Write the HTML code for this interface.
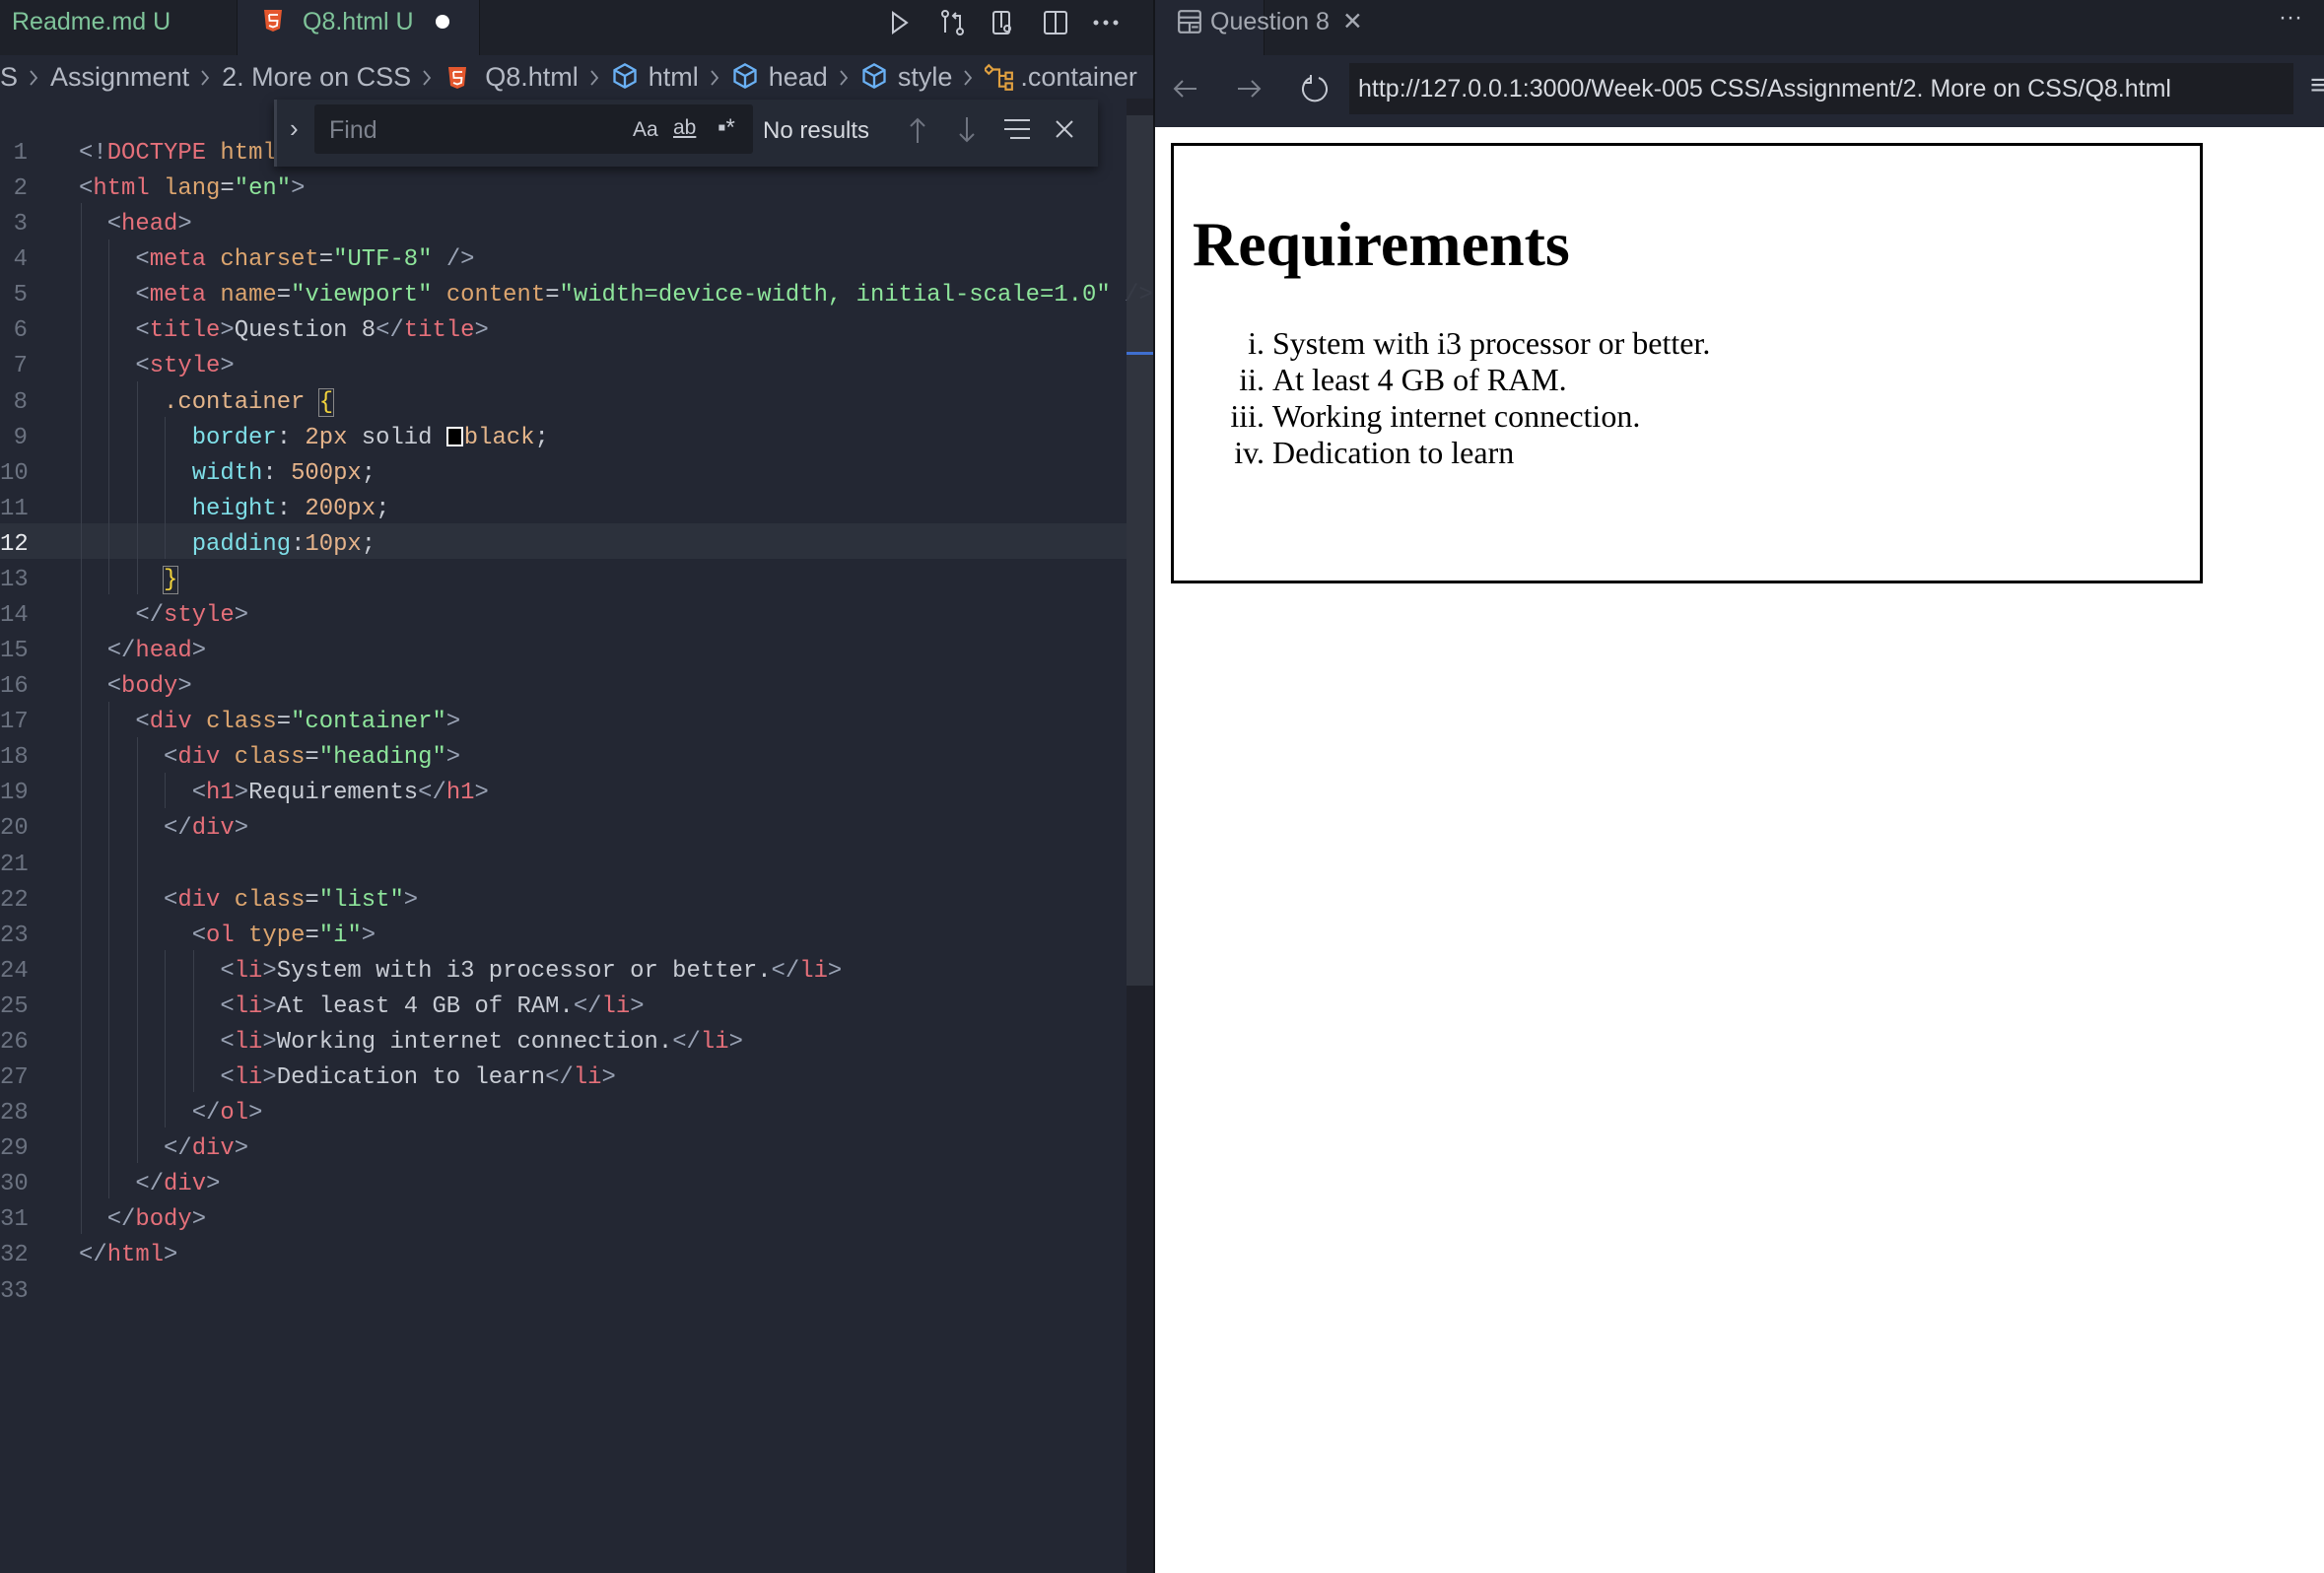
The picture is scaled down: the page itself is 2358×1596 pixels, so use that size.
<!DOCTYPE html>
<html><head><meta charset="utf-8"><style>
*{margin:0;padding:0;box-sizing:border-box}
body{width:2358px;height:1596px;overflow:hidden;background:#232733;position:relative;font-family:"Liberation Sans",sans-serif}
.a{position:absolute}
#tabs{left:0;top:0;width:1170px;height:56px;background:#1e2129}
.tab{position:absolute;top:0;height:56px;font-size:25px;line-height:44px;color:#7fc49a;white-space:nowrap}
#crumb{left:0;top:56px;width:1170px;height:44px;background:#232733;font-size:27px;color:#b4b9c4;line-height:44px;white-space:nowrap;overflow:hidden}
.s{display:inline-block;width:12px;height:18px;margin:0 11px 0 10px;vertical-align:-1px}
.code{font-family:"Liberation Mono",monospace;font-size:23.9px;white-space:pre;line-height:36.08px}
#lines{left:80px;top:138px;color:#c8ccd4}
#nums{left:0;top:138px;width:28px;text-align:right;color:#6b7280}
.t{color:#e5707a}.p{color:#9aa3b5}.at{color:#dca56f}.st{color:#8ee59b}.pr{color:#7fdfe8}.n{color:#e5b38a}.sel{color:#e4b58a}.br{color:#f2d33c}
.g{position:absolute;width:1px;background:#3a3f4b}
#find{left:278px;top:101px;width:836px;height:68px;background:#252a35;box-shadow:0 4px 10px rgba(0,0,0,.5);border-left:3px solid #3b404c}
#br{left:1170px;top:0;width:1188px;height:1596px;background:#fff;border-left:2px solid #14161b}
.cube{display:inline-block;vertical-align:-4px;margin-right:10px}
</style></head><body>
<svg width="0" height="0" style="position:absolute"><defs>
<symbol id="chev" viewBox="0 0 12 18"><path d="M3 2l6 7-6 7" fill="none" stroke="#8a909c" stroke-width="1.8"/></symbol>
<symbol id="cb" viewBox="0 0 24 24"><path d="M12 2l9 5v10l-9 5-9-5V7z M3 7l9 5 9-5 M12 12v10" fill="none" stroke="#6ab0f3" stroke-width="2"/></symbol>
</defs></svg>
<div class="a" id="tabs">
 <div class="tab" style="left:0;width:241px;padding-left:12px;border-right:1px solid #15171c">Readme.md U</div>
 <div class="tab" style="left:241px;width:246px;background:#232733;padding-left:26px;border-right:1px solid #15171c">
  <svg width="20" height="24" viewBox="0 0 20 24" style="vertical-align:-3px;margin-right:20px"><path d="M1 1h18l-2 19-7 3-7-3z" fill="#e4572e"/><path d="M6 6h9M6 6l.5 6h8l-.5 5-4 1.5-4-1.5" stroke="#fff" stroke-width="1.8" fill="none"/></svg>Q8.html U<span style="display:inline-block;width:14px;height:14px;border-radius:50%;background:#fff;margin-left:22px;vertical-align:1px"></span></div>
 <svg class="a" style="left:900px;top:8px" width="250" height="30" viewBox="0 0 250 30" fill="none" stroke="#c5c9d2" stroke-width="2">
  <path d="M6 5l14 10-14 10z"/>
  <circle cx="59" cy="6" r="3"/><circle cx="74" cy="24" r="3"/><path d="M59 9v16M74 21V8h-7M70 5l-3 3 3 3"/>
  <rect x="108" y="4" width="16" height="22" rx="2"/><path d="M116 4v16"/><circle cx="122" cy="21" r="3"/>
  <rect x="160" y="4" width="22" height="22" rx="2"/><path d="M171 4v22"/>
  <circle cx="212" cy="15" r="1.5" fill="#c5c9d2"/><circle cx="222" cy="15" r="1.5" fill="#c5c9d2"/><circle cx="232" cy="15" r="1.5" fill="#c5c9d2"/>
 </svg>
</div>
<div class="a" id="crumb">S<svg class="s"><use href="#chev"/></svg>Assignment<svg class="s"><use href="#chev"/></svg>2. More on CSS<svg class="s"><use href="#chev"/></svg><svg width="20" height="24" viewBox="0 0 20 24" style="vertical-align:-4px;margin:0 18px 0 4px"><path d="M1 1h18l-2 19-7 3-7-3z" fill="#e4572e"/><path d="M6 6h9M6 6l.5 6h8l-.5 5-4 1.5-4-1.5" stroke="#fff" stroke-width="1.8" fill="none"/></svg>Q8.html<svg class="s"><use href="#chev"/></svg><svg class="cube" width="28" height="28"><use href="#cb"/></svg>html<svg class="s"><use href="#chev"/></svg><svg class="cube" width="28" height="28"><use href="#cb"/></svg>head<svg class="s"><use href="#chev"/></svg><svg class="cube" width="28" height="28"><use href="#cb"/></svg>style<svg class="s"><use href="#chev"/></svg><svg width="30" height="30" viewBox="0 0 28 28" style="vertical-align:-6px;margin-right:6px" fill="none" stroke="#e0a040" stroke-width="2"><path d="M4 3l4 4-4 4-4-4z M20 10h6v6h-6z M20 20h6v6h-6z M8 7h6v16h6 M14 13h6"/></svg>.container</div>

<div class="a" style="left:0;top:531px;width:1143px;height:36px;background:#2c313c"></div>
<div class="g" style="left:82px;top:206px;height:1046px"></div>
<div class="g" style="left:110px;top:243px;height:360px"></div>
<div class="g" style="left:110px;top:712px;height:504px"></div>
<div class="g" style="left:139px;top:387px;height:216px"></div>
<div class="g" style="left:139px;top:748px;height:432px"></div>
<div class="g" style="left:167px;top:423px;height:144px"></div>
<div class="g" style="left:167px;top:784px;height:36px"></div>
<div class="g" style="left:167px;top:964px;height:180px"></div>
<div class="g" style="left:196px;top:964px;height:144px"></div>

<div class="a code" id="nums">1
2
3
4
5
6
7
8
9
10
11
<span style="color:#e8eaee">12</span>
13
14
15
16
17
18
19
20
21
22
23
24
25
26
27
28
29
30
31
32
33</div>
<div class="a code" id="lines"><span class="p">&lt;!</span><span class="t">DOCTYPE</span> <span class="at">html</span><span class="p">&gt;</span>
<span class="p">&lt;</span><span class="t">html</span> <span class="at">lang</span>=<span class="st">"en"</span><span class="p">&gt;</span>
  <span class="p">&lt;</span><span class="t">head</span><span class="p">&gt;</span>
    <span class="p">&lt;</span><span class="t">meta</span> <span class="at">charset</span>=<span class="st">"UTF-8"</span> <span class="p">/&gt;</span>
    <span class="p">&lt;</span><span class="t">meta</span> <span class="at">name</span>=<span class="st">"viewport"</span> <span class="at">content</span>=<span class="st">"width=device-width, initial-scale=1.0"</span> <span class="p">/&gt;</span>
    <span class="p">&lt;</span><span class="t">title</span><span class="p">&gt;</span>Question 8<span class="p">&lt;/</span><span class="t">title</span><span class="p">&gt;</span>
    <span class="p">&lt;</span><span class="t">style</span><span class="p">&gt;</span>
      <span class="sel">.container</span> <span class="br" style="outline:1px solid #888">{</span>
        <span class="pr">border</span>: <span class="n">2px</span> solid <span style="display:inline-block;width:13px;height:16px;background:#000;outline:2px solid #fff;vertical-align:-1px;margin:0 3px 0 2px"></span><span class="sel">black</span>;
        <span class="pr">width</span>: <span class="n">500px</span>;
        <span class="pr">height</span>: <span class="n">200px</span>;
        <span class="pr">padding</span>:<span class="n">10px</span>;
      <span class="br" style="outline:1px solid #888">}</span>
    <span class="p">&lt;/</span><span class="t">style</span><span class="p">&gt;</span>
  <span class="p">&lt;/</span><span class="t">head</span><span class="p">&gt;</span>
  <span class="p">&lt;</span><span class="t">body</span><span class="p">&gt;</span>
    <span class="p">&lt;</span><span class="t">div</span> <span class="at">class</span>=<span class="st">"container"</span><span class="p">&gt;</span>
      <span class="p">&lt;</span><span class="t">div</span> <span class="at">class</span>=<span class="st">"heading"</span><span class="p">&gt;</span>
        <span class="p">&lt;</span><span class="t">h1</span><span class="p">&gt;</span>Requirements<span class="p">&lt;/</span><span class="t">h1</span><span class="p">&gt;</span>
      <span class="p">&lt;/</span><span class="t">div</span><span class="p">&gt;</span>

      <span class="p">&lt;</span><span class="t">div</span> <span class="at">class</span>=<span class="st">"list"</span><span class="p">&gt;</span>
        <span class="p">&lt;</span><span class="t">ol</span> <span class="at">type</span>=<span class="st">"i"</span><span class="p">&gt;</span>
          <span class="p">&lt;</span><span class="t">li</span><span class="p">&gt;</span>System with i3 processor or better.<span class="p">&lt;/</span><span class="t">li</span><span class="p">&gt;</span>
          <span class="p">&lt;</span><span class="t">li</span><span class="p">&gt;</span>At least 4 GB of RAM.<span class="p">&lt;/</span><span class="t">li</span><span class="p">&gt;</span>
          <span class="p">&lt;</span><span class="t">li</span><span class="p">&gt;</span>Working internet connection.<span class="p">&lt;/</span><span class="t">li</span><span class="p">&gt;</span>
          <span class="p">&lt;</span><span class="t">li</span><span class="p">&gt;</span>Dedication to learn<span class="p">&lt;/</span><span class="t">li</span><span class="p">&gt;</span>
        <span class="p">&lt;/</span><span class="t">ol</span><span class="p">&gt;</span>
      <span class="p">&lt;/</span><span class="t">div</span><span class="p">&gt;</span>
    <span class="p">&lt;/</span><span class="t">div</span><span class="p">&gt;</span>
  <span class="p">&lt;/</span><span class="t">body</span><span class="p">&gt;</span>
<span class="p">&lt;/</span><span class="t">html</span><span class="p">&gt;</span>
</div>

<div class="a" style="left:1143px;top:100px;width:27px;height:1496px;background:rgba(30,33,41,.85)"></div>
<div class="a" style="left:1143px;top:117px;width:27px;height:883px;background:rgba(60,65,76,.6)"></div>
<div class="a" style="left:1143px;top:357px;width:27px;height:3px;background:#3f6fd0"></div>

<div class="a" id="find">
 <div class="a" style="left:13px;top:14px;color:#c5c9d2;font-size:26px">›</div>
 <div class="a" style="left:38px;top:5px;width:445px;height:50px;background:#1b1e25;border-radius:3px"></div>
 <div class="a" style="left:53px;top:17px;color:#7d828d;font-size:25px">Find</div>
 <div class="a" style="left:361px;top:19px;color:#c5c9d2;font-size:21px">Aa</div>
 <div class="a" style="left:402px;top:17px;color:#c5c9d2;font-size:21px;text-decoration:underline">ab</div>
 <div class="a" style="left:447px;top:15px;color:#c5c9d2;font-size:24px">▪*</div>
 <div class="a" style="left:493px;top:18px;color:#d6d9df;font-size:24px">No results</div>
 <svg class="a" style="left:640px;top:16px" width="100" height="30" fill="none" stroke="#6f7480" stroke-width="2"><path d="M10 4v24M3 11l7-7 7 7"/><path d="M60 2v24M53 19l7 7 7-7"/></svg>
 <svg class="a" style="left:736px;top:18px" width="30" height="24" fill="none" stroke="#c5c9d2" stroke-width="2"><path d="M2 3h26M2 12h26M8 21h20"/></svg>
 <svg class="a" style="left:789px;top:20px" width="20" height="20" fill="none" stroke="#c5c9d2" stroke-width="2"><path d="M2 2l16 16M18 2L2 18"/></svg>
</div>

<div class="a" id="br">
 <div class="a" style="left:0;top:0;width:1188px;height:56px;background:#1e2129"></div>
 <div class="a" style="left:0;top:0;width:111px;height:56px;background:#232733;border-right:1px solid #15171c;color:#a5a9b2;font-size:25px;line-height:44px;padding-left:56px;white-space:nowrap">Question 8 <span style="margin-left:6px">✕</span></div>
 <svg class="a" style="left:22px;top:9px" width="26" height="26" viewBox="0 0 24 24" fill="none" stroke="#a5a9b2" stroke-width="2"><rect x="2" y="2" width="20" height="20" rx="2"/><path d="M2 8h20M2 13h20M12 13v9M14 17h6"/></svg>
 <div class="a" style="left:1140px;top:4px;color:#c5c9d2;font-size:24px">···</div>
 <div class="a" style="left:0;top:56px;width:1188px;height:73px;background:#232733"></div>
 <svg class="a" style="left:18px;top:76px" width="120" height="28" fill="none" stroke="#7d828d" stroke-width="2"><path d="M2 14h22M10 6l-8 8 8 8"/><path d="M66 14h22M80 6l8 8-8 8"/></svg>
 <svg class="a" style="left:148px;top:74px" width="30" height="32" fill="none" stroke="#c5c9d2" stroke-width="2"><path d="M10 5a12 12 0 1 0 8 0M10 2v8H3"/></svg>
 <div class="a" style="left:197px;top:64px;width:958px;height:52px;background:#1c1e24;color:#d6d9df;font-size:25px;line-height:52px;padding-left:9px;white-space:nowrap">http://127.0.0.1:3000/Week-005 CSS/Assignment/2. More on CSS/Q8.html</div>
 <div class="a" style="left:1172px;top:70px;color:#c5c9d2;font-size:30px">≡</div>
 <div class="a" style="left:16px;top:145px;width:1047px;height:447px;border:3.5px solid #000"></div>
 <div class="a" style="left:38px;top:208px;font-family:'Liberation Serif',serif;font-weight:bold;font-size:64px;line-height:80px;color:#000;white-space:nowrap">Requirements</div>
 <div class="a" style="left:0;top:330px;width:111px;font-family:'Liberation Serif',serif;font-size:32px;line-height:37px;color:#000;text-align:right">i.<br>ii.<br>iii.<br>iv.</div>
 <div class="a" style="left:111px;top:330px;font-family:'Liberation Serif',serif;font-size:32px;line-height:37px;color:#000;white-space:nowrap;padding-left:8px">System with i3 processor or better.<br>At least 4 GB of RAM.<br>Working internet connection.<br>Dedication to learn</div>
</div>
</body></html>
